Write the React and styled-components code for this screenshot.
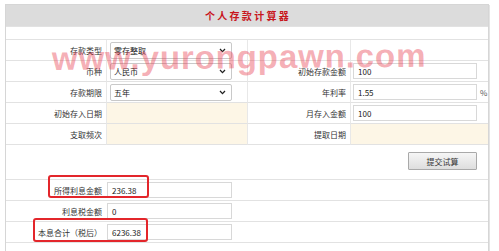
import React from "react";
import styled, { createGlobalStyle } from "styled-components";

const Global = createGlobalStyle`
  html, body { margin: 0; padding: 0; background: #fff; }
  body { font-family: "Noto Sans CJK SC", "Liberation Sans", sans-serif; color: #333; }
  * { box-sizing: border-box; }
`;

const Page = styled.div`
  position: relative;
  width: 499px;
  height: 251px;
  overflow: hidden;
  padding: 4px 0 0 5px;
`;

const Frame = styled.div`
  width: 484px;
  border: 1px solid #d6d6d6;
  border-bottom: none;
  box-shadow: 2px 0 0 -1px #e4e4e4;
`;

const Header = styled.div`
  height: 22px;
  background: #dcdcdc;
  border-bottom: 1px solid #e2e2e2;
  display: flex;
  align-items: center;
  justify-content: center;
  color: #c8161d;
  font-weight: bold;
  font-size: 10px;
  letter-spacing: 2.3px;
  padding-left: 2px;
`;

const Spacer = styled.div`
  height: 13px;
  border-bottom: 1px solid #e2e2e2;
`;

const FormGrid = styled.div`
  display: grid;
  grid-template-columns: 101px 141px 103px 137px;
  grid-auto-rows: 21px;
`;

const Cell = styled.div`
  border-bottom: 1px solid #e2e2e2;
  border-right: ${(p) => (p.$last ? "none" : "1px solid #e8e8e8")};
  background: ${(p) => (p.$fill ? "#fdf6e6" : "transparent")};
  display: flex;
  align-items: center;
  justify-content: ${(p) => (p.$label ? "flex-end" : "flex-start")};
  padding: ${(p) => (p.$label ? "0 4px 0 0" : "0 0 0 2px")};
  font-size: 8px;
  white-space: nowrap;
`;

const FakeSelect = styled.div`
  width: 122px;
  height: 17px;
  margin-left: 1px;
  border: 1px solid #c9c9c9;
  border-radius: 2px;
  background: #fff;
  display: flex;
  align-items: center;
  justify-content: space-between;
  padding: 0 5px 0 3px;
  font-size: 8px;
  color: #222;
`;

const Field = styled.div`
  width: ${(p) => p.$w || 124}px;
  height: 16px;
  border: 1px solid #d8d8d8;
  background: #fff;
  display: flex;
  align-items: center;
  padding-left: 4px;
  font-size: 8px;
  color: #222;
`;

const Unit = styled.span`
  margin-left: 3px;
  font-size: 8px;
  color: #555;
`;

const ButtonRow = styled.div`
  height: 35px;
  border-bottom: 1px solid #e2e2e2;
  display: flex;
  justify-content: flex-end;
  align-items: flex-start;
  padding: 7px 11px 0 0;
`;

const Button = styled.button`
  width: 69px;
  height: 18px;
  padding: 0;
  border: 1px solid #a9a9a9;
  border-radius: 1px;
  background: linear-gradient(#f6f6f6, #dedede);
  font-family: "Noto Sans CJK SC", sans-serif;
  font-size: 8px;
  color: #333;
`;

const ResultRow = styled.div`
  height: 21px;
  border-bottom: 1px solid #e2e2e2;
  display: grid;
  grid-template-columns: 101px 1fr;
  align-items: center;
`;

const ResultLabel = styled.div`
  text-align: right;
  padding-right: 5px;
  font-size: 8px;
  white-space: nowrap;
`;

const Watermark = styled.div`
  position: absolute;
  left: 52px;
  top: 42px;
  font-family: "Liberation Sans", Arial, sans-serif;
  font-weight: bold;
  font-size: 33px;
  line-height: 33px;
  letter-spacing: 0.9px;
  color: rgba(232, 62, 78, 0.42);
  transform: rotate(-0.5deg);
  transform-origin: left center;
  pointer-events: none;
  white-space: nowrap;
`;

const Highlight = styled.div`
  position: absolute;
  border: 2px solid #e3262b;
  border-radius: 3px;
  pointer-events: none;
`;

const Chevron = () => (
  <svg width="7" height="5" viewBox="0 0 7 5">
    <path d="M1 1 L3.5 3.6 L6 1" fill="none" stroke="#222" strokeWidth="1.3" />
  </svg>
);

const Select = ({ value }) => (
  <FakeSelect>
    <span>{value}</span>
    <Chevron />
  </FakeSelect>
);

export default function App() {
  return (
    <>
      <Global />
      <Page>
        <Frame>
          <Header>个人存款计算器</Header>
          <Spacer />
          <FormGrid>
            <Cell $label>存款类型</Cell>
            <Cell><Select value="零存整取" /></Cell>
            <Cell $label></Cell>
            <Cell $last></Cell>

            <Cell $label>币种</Cell>
            <Cell><Select value="人民币" /></Cell>
            <Cell $label>初始存款金额</Cell>
            <Cell $last><Field>100</Field></Cell>

            <Cell $label>存款期限</Cell>
            <Cell><Select value="五年" /></Cell>
            <Cell $label>年利率</Cell>
            <Cell $last><Field>1.55</Field><Unit>%</Unit></Cell>

            <Cell $label>初始存入日期</Cell>
            <Cell $fill></Cell>
            <Cell $label>月存入金额</Cell>
            <Cell $last><Field>100</Field></Cell>

            <Cell $label>支取频次</Cell>
            <Cell $fill></Cell>
            <Cell $label>提取日期</Cell>
            <Cell $last $fill></Cell>
          </FormGrid>
          <ButtonRow>
            <Button>提交试算</Button>
          </ButtonRow>
          <ResultRow>
            <ResultLabel>所得利息金额</ResultLabel>
            <Field $w={125}>236.38</Field>
          </ResultRow>
          <ResultRow>
            <ResultLabel>利息税金额</ResultLabel>
            <Field $w={125}>0</Field>
          </ResultRow>
          <ResultRow>
            <ResultLabel>本息合计（税后）</ResultLabel>
            <Field $w={125}>6236.38</Field>
          </ResultRow>
          <ResultRow />
        </Frame>
        <Watermark>www.yurongpawn.com</Watermark>
        <Highlight style={{ left: 48, top: 175, width: 101, height: 23 }} />
        <Highlight style={{ left: 33, top: 218, width: 115, height: 24 }} />
      </Page>
    </>
  );
}
